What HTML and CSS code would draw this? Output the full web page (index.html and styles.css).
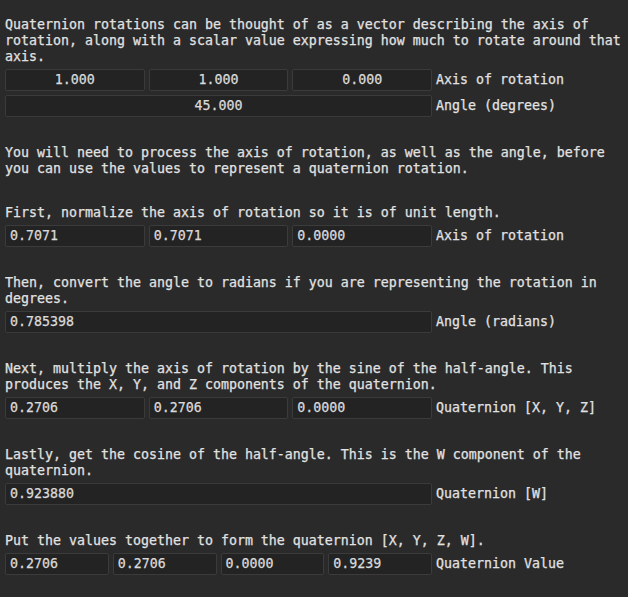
FILE: index.html
```html
<!DOCTYPE html>
<html>
<head>
<meta charset="utf-8">
<link rel="stylesheet" href="styles.css">
</head>
<body>
<div class="panel">
  <section class="group">
    <p class="txt">Quaternion rotations can be thought of as a vector describing the axis of rotation, along with a scalar value expressing how much to rotate around that axis.</p>
    <div class="row">
      <div class="fields f3">
        <div class="field center">1.000</div>
        <div class="field center">1.000</div>
        <div class="field center">0.000</div>
      </div>
      <span class="label">Axis of rotation</span>
    </div>
    <div class="row">
      <div class="fields f1">
        <div class="field center">45.000</div>
      </div>
      <span class="label">Angle (degrees)</span>
    </div>
  </section>

  <section class="group">
    <p class="txt">You will need to process the axis of rotation, as well as the angle, before you can use the values to represent a quaternion rotation.</p>
  </section>

  <section class="group">
    <p class="txt">First, normalize the axis of rotation so it is of unit length.</p>
    <div class="row">
      <div class="fields f3">
        <div class="field">0.7071</div>
        <div class="field">0.7071</div>
        <div class="field">0.0000</div>
      </div>
      <span class="label">Axis of rotation</span>
    </div>
  </section>

  <section class="group">
    <p class="txt">Then, convert the angle to radians if you are representing the rotation in degrees.</p>
    <div class="row">
      <div class="fields f1">
        <div class="field">0.785398</div>
      </div>
      <span class="label">Angle (radians)</span>
    </div>
  </section>

  <section class="group">
    <p class="txt">Next, multiply the axis of rotation by the sine of the half&#8209;angle. This produces the X, Y, and Z components of the quaternion.</p>
    <div class="row">
      <div class="fields f3">
        <div class="field">0.2706</div>
        <div class="field">0.2706</div>
        <div class="field">0.0000</div>
      </div>
      <span class="label">Quaternion [X, Y, Z]</span>
    </div>
  </section>

  <section class="group">
    <p class="txt">Lastly, get the cosine of the half&#8209;angle. This is the W component of the quaternion.</p>
    <div class="row">
      <div class="fields f1">
        <div class="field">0.923880</div>
      </div>
      <span class="label">Quaternion [W]</span>
    </div>
  </section>

  <section class="group">
    <p class="txt">Put the values together to form the quaternion [X, Y, Z, W].</p>
    <div class="row">
      <div class="fields f4">
        <div class="field">0.2706</div>
        <div class="field">0.2706</div>
        <div class="field">0.0000</div>
        <div class="field">0.9239</div>
      </div>
      <span class="label">Quaternion Value</span>
    </div>
  </section>
</div>
</body>
</html>
```

FILE: styles.css
```css
html, body {
  margin: 0;
  padding: 0;
  background: #2a2a2a;
}

body {
  width: 628px;
  height: 597px;
  overflow: hidden;
  font-family: "DejaVu Sans Mono", "Liberation Mono", monospace;
  font-size: 13.29px;
  line-height: 16px;
  color: #e2e2e2;
  -webkit-text-stroke: 0.25px currentColor;
}

.panel {
  display: flex;
  flex-direction: column;
  gap: 28px;
  padding: 17px 0 0 5px;
}

.group {
  display: flex;
  flex-direction: column;
  gap: 4px;
}

.txt {
  margin: 0;
  width: 620px;
}

.row {
  display: flex;
  align-items: center;
  gap: 4px;
}

.fields {
  width: 427px;
  display: grid;
  gap: 4px;
}

.f1 { grid-template-columns: 1fr; }
.f3 { grid-template-columns: repeat(3, 1fr); }
.f4 { grid-template-columns: repeat(4, 1fr); }

.field {
  height: 22px;
  box-sizing: border-box;
  border: 1px solid #3b3b3b;
  border-radius: 2px;
  background: #232323;
  padding: 0 4px;
  line-height: 20px;
  color: #dadada;
  white-space: nowrap;
  overflow: hidden;
}

.center {
  text-align: center;
}

.label {
  white-space: nowrap;
}
```
